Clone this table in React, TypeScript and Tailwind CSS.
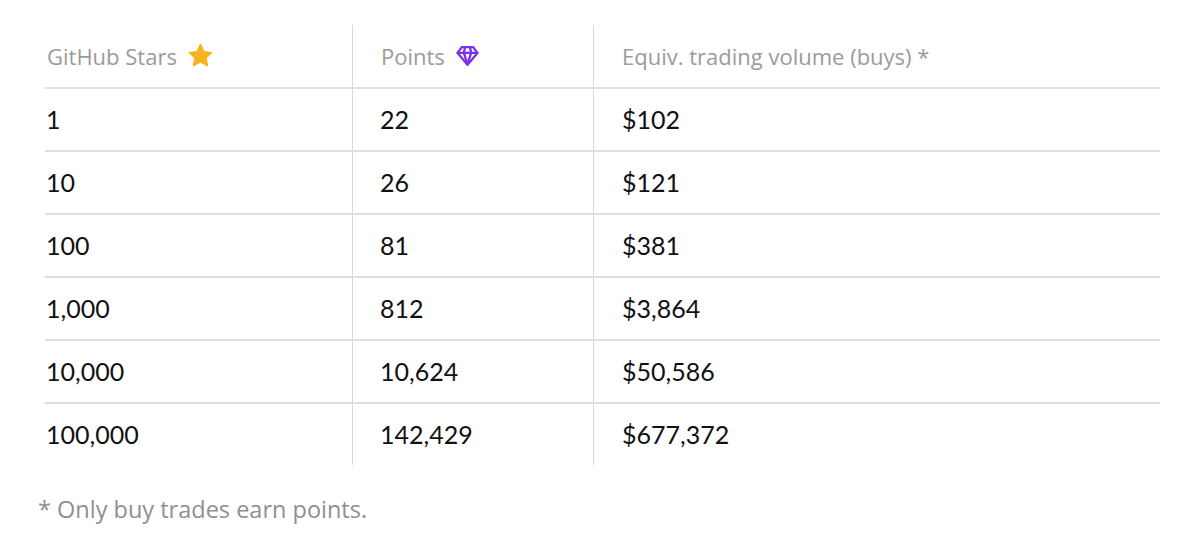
import React from 'react';

const rows = [
  ['1', '22', '$102'],
  ['10', '26', '$121'],
  ['100', '81', '$381'],
  ['1,000', '812', '$3,864'],
  ['10,000', '10,624', '$50,586'],
  ['100,000', '142,429', '$677,372'],
];

const Star = () => (
  <svg viewBox="0 0 24 24" className="w-[27px] h-[27px] inline-block ml-[10px] -mt-[2px]">
    <path
      d="M12 1.8l3.1 6.6 7.1.9-5.2 4.9 1.4 7.1L12 17.8l-6.4 3.5 1.4-7.1-5.2-4.9 7.1-.9z"
      fill="#f9b31d"
      stroke="#f9b31d"
      strokeWidth="1"
      strokeLinejoin="round"
    />
  </svg>
);

const Gem = () => (
  <svg
    viewBox="0 0 24 24"
    className="w-[25px] h-[25px] inline-block ml-[10px] -mt-[2px]"
    fill="none"
    stroke="#7b2ff0"
    strokeWidth="2.2"
    strokeLinejoin="round"
    strokeLinecap="round"
  >
    <path d="M6.5 4h11l4 5.5L12 21 2.5 9.5z" />
    <path d="M2.5 9.5h19" />
    <path d="M9.5 4.5L8.5 9.5 12 20.5l3.5-11-1-5" />
  </svg>
);

export default function App() {
  return (
    <div className="w-[1200px] h-[546px] bg-white" style={{ fontFamily: 'Lato, "Noto Sans", sans-serif' }}>
      <div className="ml-[45px] w-[1115px] pt-[25px]">
        <div
          className="grid grid-cols-[307px_241px_1fr] h-[62px] text-[22px] text-[#9b9b9b]"
          style={{ fontFamily: '"Open Sans", "Noto Sans", sans-serif' }}
        >
          <div className="flex items-center pl-[2px]">
            GitHub Stars
            <Star />
          </div>
          <div className="flex items-center border-l border-[#d8d8d8] pl-[28px]">
            Points
            <Gem />
          </div>
          <div className="flex items-center border-l border-[#d8d8d8] pl-[28px]">
            Equiv. trading volume (buys) *
          </div>
        </div>
        {rows.map((r) => (
          <div
            key={r[0]}
            className="grid grid-cols-[307px_241px_1fr] h-[63px] border-t-2 border-[#dedede] text-[25px] text-[#111111]"
          >
            <div className="flex items-center pl-[1px]">{r[0]}</div>
            <div className="flex items-center border-l border-[#d8d8d8] pl-[27px]">{r[1]}</div>
            <div className="flex items-center border-l border-[#d8d8d8] pl-[28px]">{r[2]}</div>
          </div>
        ))}
      </div>
      <p
        className="ml-[38px] mt-[27px] text-[23.5px] text-[#8f8f8f]"
        style={{ fontFamily: '"Open Sans", "Noto Sans", sans-serif' }}
      >
        * Only buy trades earn points.
      </p>
    </div>
  );
}
